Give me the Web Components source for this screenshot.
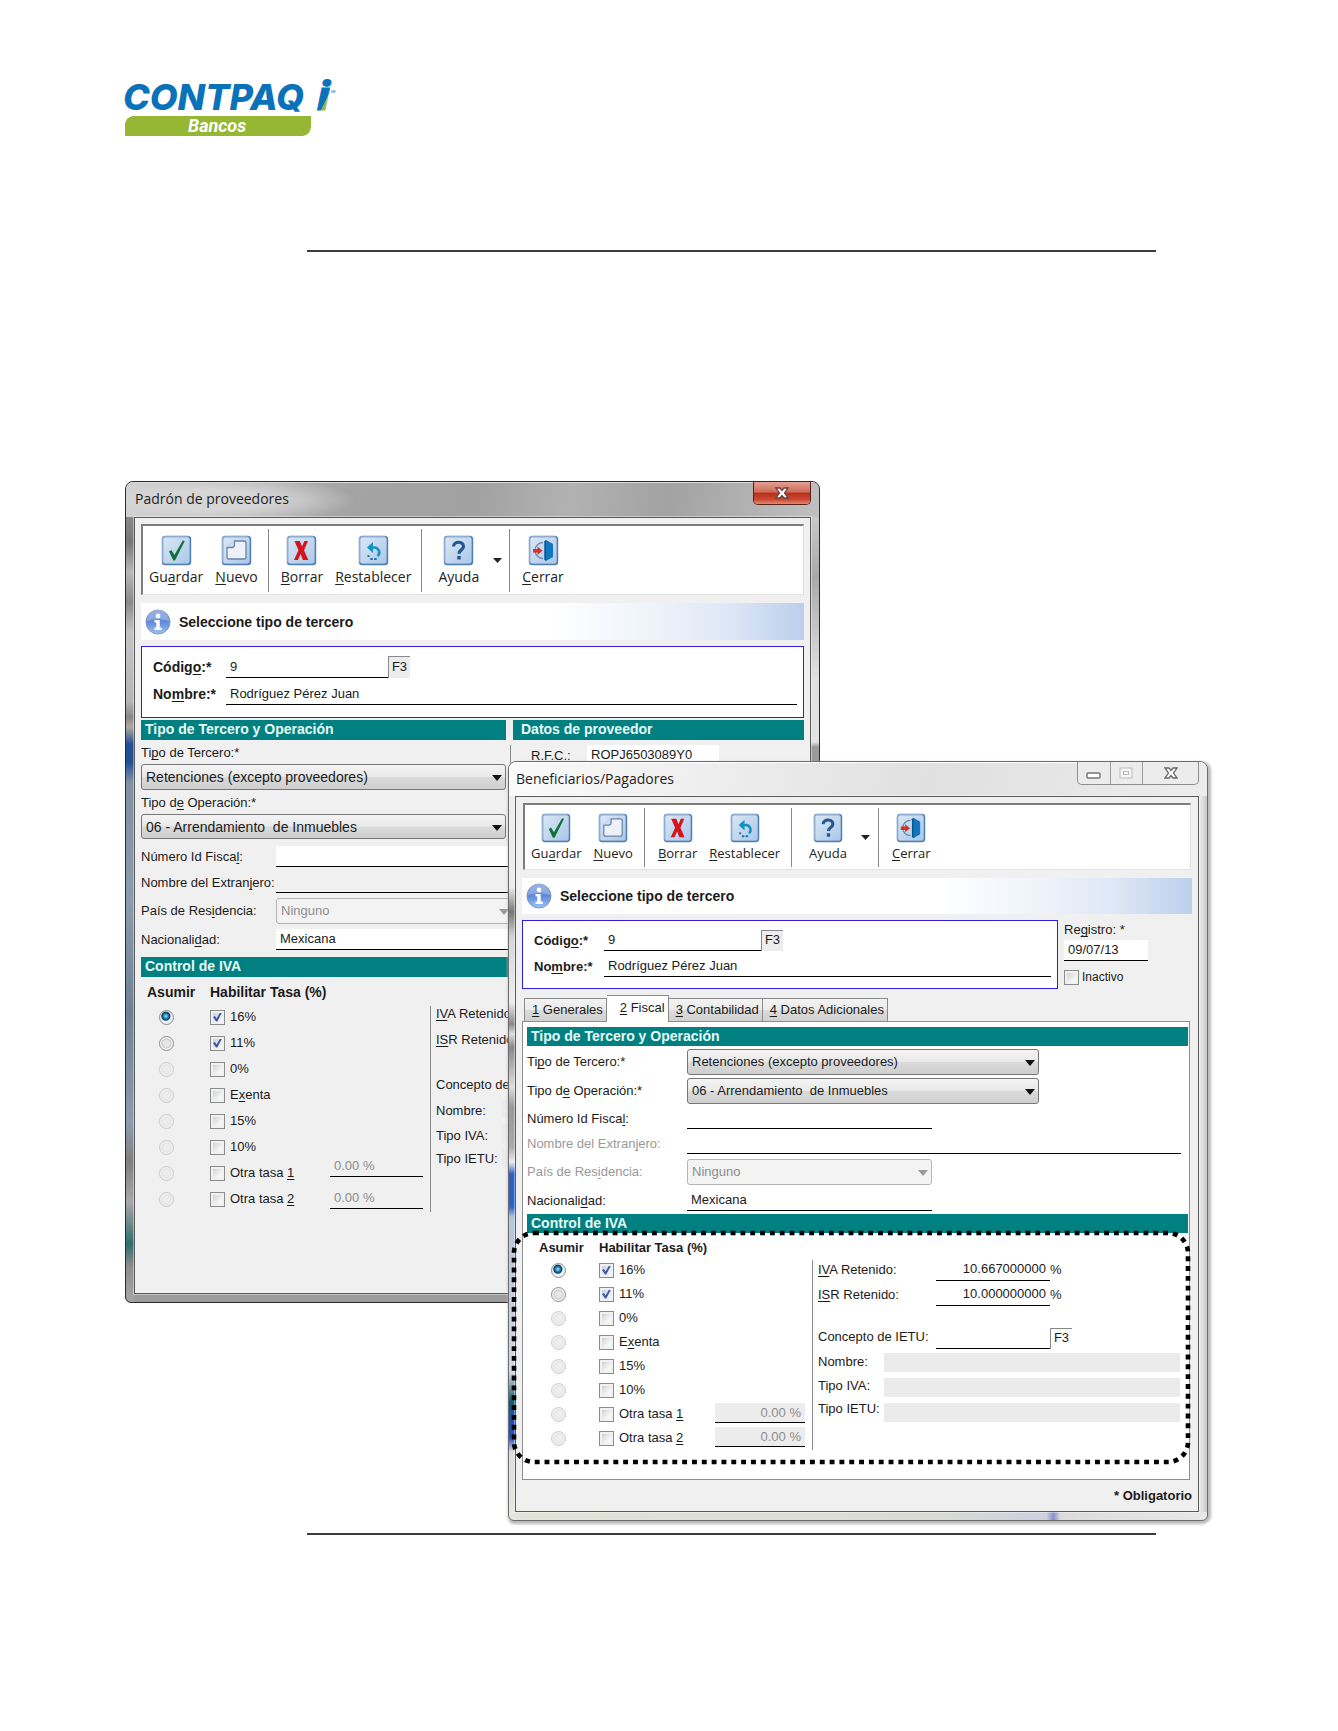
<!DOCTYPE html>
<html lang="es">
<head>
<meta charset="utf-8">
<title>CONTPAQi Bancos</title>
<style>
  body { margin: 0; background: #fff; color: #1b1b1b; font: 13px/16px "Liberation Sans", Arial, sans-serif; }
</style>
</head>
<body>
<manual-page></manual-page>

<script>
/* "Tipo de Te&rcero" -> the letter after & is the underlined access key */
const key = t => t.replace(/&(.)/g, '<u>$1</u>');
const plain = t => t.replace(/&/g, '');
const BASE = `
  *, *::before, *::after { box-sizing: border-box; }
  :host { display: block; box-sizing: border-box; }
  u { text-decoration: underline; text-underline-offset: 2px; text-decoration-skip-ink: none; }
  input, select, button { font: inherit; color: inherit; margin: 0; border-radius: 0; }
  input:focus { outline: none; }
  .line { display: block; width: 100%; min-width: 0; height: 21px; padding: 0 4px 1px; border: 0; border-bottom: 1px solid #000; background: #fff; }
  .line:disabled { color: #8d8d8d; }
`;
class Base extends HTMLElement {
  connectedCallback() {
    if (this.shadowRoot) return;
    this.attachShadow({ mode: 'open' }).innerHTML = `<style>${BASE}${this.css()}</style>${this.html()}`;
  }
  css() { return ''; }
  html() { return ''; }
  a(n, d = '') { return this.getAttribute(n) ?? d; }
}

customElements.define('brand-logo', class extends Base {
  css() { return `svg { display: block; width: 212px; height: 58px; overflow: visible; }`; }
  html() { return `
    <svg viewBox="0 0 212 58" role="img" aria-label="CONTPAQ i Bancos">
      <defs><linearGradient id="g" x1="0" y1="0" x2="0.55" y2="1">
        <stop offset="0.72" stop-color="#0a72b9"/><stop offset="0.74" stop-color="#95b935"/></linearGradient></defs>
      <text x="-2" y="31" font-size="36" fill="#0a72b9" font-family="Inter, sans-serif" font-weight="800" font-style="italic">CONTPAQ</text>
      <text x="192" y="31" font-size="39" fill="url(#g)" stroke="url(#g)" stroke-width="1" font-family="Open Sans, sans-serif" font-weight="800" font-style="italic">i</text>
      <text x="206" y="14" font-size="3" fill="#0a72b9" font-family="Roboto, sans-serif">MR</text>
      <path d="M8 37H186V48Q185 56 178 57H0V45Q1 38 8 37Z" fill="#95b733"/>
      <text x="63" y="53" font-size="18" font-weight="700" font-style="italic" fill="#fff" font-family="Roboto, sans-serif">Bancos</text>
    </svg>`; }
});

customElements.define('tool-icon', class extends Base {
  css() { return `:host { width: var(--icon, 31px); height: var(--icon, 31px); } svg { display: block; width: 100%; height: 100%; }`; }
  html() {
    const art = {
      save: `<path d="M8 16.500l2.400-1.600 3 5L21.800 5.500l2 .4L14 25.500h-1.700z" fill="#12703a"/>`,
      new: `<path d="M13.500 6H23a2 2 0 0 1 2 2v14a2 2 0 0 1-2 2H8a2 2 0 0 1-2-2v-9.500h5a2.500 2.500 0 0 0 2.500-2.500z" fill="#eef2f8" stroke="#6a83a8" stroke-width="1.300"/><path d="M6.500 11.500L12.500 6" fill="none" stroke="#c3d1e6" stroke-width="1"/>`,
      delete: `<path d="M8.500 6h5.300l2.200 5.500L18.400 6H22l-4 9.300 4.300 9.700h-5.400l-2.300-6-2.700 6H8l4.500-9.800z" fill="#d5151b"/>`,
      reset: `<path d="M10.500 12.500h6a5 5 0 0 1 3.200 8.600" fill="none" stroke="#1494c0" stroke-width="2.600"/><path d="M15 7v11l-6-5.500z" fill="#1494c0"/><g fill="#236fae"><rect x="9.500" y="20" width="2" height="2"/><rect x="12.300" y="23" width="2.500" height="2"/><rect x="16.200" y="23" width="2.500" height="2"/></g>`,
      help: `<path d="M10.500 11.500c.4-6 10.500-5.400 10 .2-.3 3.300-4.500 3.200-4.500 7" fill="none" stroke="#23588f" stroke-width="3.200"/><rect x="14.300" y="21" width="3.400" height="3.500" fill="#23588f"/>`,
      close: `<path d="M15 7.500a7.500 7.500 0 0 0 0 16" fill="none" stroke="#6d86ab" stroke-width="1.300"/><path d="M16.500 6.500L18 5l7 4v13l-7 4-1.500-1.500z" fill="#1176bd"/><path d="M16.500 6.500l1.500-1.500v21l-1.500-1.500z" fill="#0a5595"/><path d="M5 14h4.500v-2.500l5 4.200-5 4.200V17.500H5z" fill="#d63324"/>`
    }[this.a('name')];
    return `<svg viewBox="0 0 31 31" aria-hidden="true"><defs><linearGradient id="b" x1="0" y1="0" x2="1" y2="1"><stop offset="0" stop-color="#d9e7f7"/><stop offset=".5" stop-color="#c3d7ee"/><stop offset="1" stop-color="#aac8ea"/></linearGradient></defs>
      <rect x=".8" y=".8" width="29.400" height="29.400" rx="3.500" fill="#4f7db4"/><rect x="1" y="1" width="27.500" height="27.500" rx="3" fill="#8fadd2"/><rect x="2.500" y="2.500" width="26" height="26" rx="2" fill="url(#b)"/>${art}</svg>`;
  }
});

customElements.define('tool-button', class extends Base {
  css() { return `
    button { display: flex; flex-direction: column; align-items: center; gap: 1px; padding: 0 6px; border: 0; background: none; color: #222;
      font: var(--tool-font, 14px)/19px "Open Sans", sans-serif; white-space: nowrap; }`; }
  html() { return `<button type="button"><tool-icon name="${this.a('icon')}"></tool-icon><span>${key(this.a('label'))}</span></button>`; }
});

customElements.define('tool-bar', class extends Base {
  css() { return `
    :host { display: flex; height: var(--bar, 71px); border: 2px solid #7d7d7d; border-right: 1px solid #dedede; border-bottom: 1px solid #e2e2e2; background: #fff; }
    tool-button { padding-top: var(--bar-pad, 9px); }
    i { flex: none; width: 1px; margin: 3px var(--sep-r, 6px) 2px var(--sep-l, 4px); background: #8a8a8a; }
    button { align-self: stretch; padding: 0 2px 0 7px; border: 0; background: none; display: flex; align-items: center; }
    .ay { margin-left: var(--help-gap, 4px); }
    svg { display: block; }`; }
  html() { return `
    <tool-button icon="save" label="Gu&ardar"></tool-button><tool-button icon="new" label="&Nuevo"></tool-button><i></i>
    <tool-button icon="delete" label="&Borrar"></tool-button><tool-button icon="reset" label="&Restablecer"></tool-button><i></i>
    <tool-button class="ay" icon="help" label="Ayuda"></tool-button>
    <button type="button" aria-label="Más ayuda"><svg width="11" height="5"><path d="M1 0h9L5.500 5z" fill="#222"/></svg></button><i></i>
    <tool-button icon="close" label="&Cerrar"></tool-button>`; }
});

customElements.define('info-banner', class extends Base {
  css() { return `
    :host { display: flex; align-items: center; gap: 8px; height: var(--banner, 37px); padding-left: 4px; font: bold 14px/18px "Liberation Sans", Arial, sans-serif;
      background: linear-gradient(90deg, #fff 62%, #edf2fb 78%, #dfe8f7 88%, #bccfed); }
    svg { width: 26px; height: 26px; }`; }
  html() { return `<svg viewBox="0 0 26 26" aria-hidden="true"><defs><linearGradient id="c" x1="0" y1="0" x2="0" y2="1"><stop offset="0" stop-color="#6f97da"/><stop offset=".5" stop-color="#6089d8"/><stop offset="1" stop-color="#9cc4fa"/></linearGradient></defs>
    <circle cx="13" cy="13" r="12" fill="url(#c)" stroke="#8096be"/><path d="M2 12a11 11 0 0 1 22 0q-11-4-22 0z" fill="#fff" opacity=".25"/>
    <circle cx="13" cy="7" r="2.400" fill="#fff"/><path d="M9.500 11h5.200v7.500h2v2.500H9.500v-2.500h1.800v-5H9.500z" fill="#fff"/></svg><span><slot></slot></span>`; }
});

customElements.define('section-title', class extends Base {
  css() { return `:host { height: var(--sec, 20px); padding-left: 4px; background: #008080; color: #e8fbf8; font: bold 14px/18px "Liberation Sans", Arial, sans-serif; white-space: nowrap; overflow: hidden; }`; }
  html() { return `<slot></slot>`; }
});

customElements.define('code-box', class extends Base {
  css() { return `
    :host { display: flex; flex-direction: column; gap: 5px; border: 1px solid #2a1fe0; background: #fff; padding: 9px 6px var(--box-end, 12px) 11px; }
    div { display: flex; align-items: center; }
    label { flex: none; width: var(--box-label, 73px); font-weight: bold; font-size: var(--bold, 14px); white-space: nowrap; }
    .line { height: var(--field, 22px); }
    .code { width: var(--code, 162px); }
    button { align-self: stretch; width: 22px; padding: 0 0 2px; border: 0; border-top: 1px solid #888; border-left: 1px solid #888; background: #ededed; }`; }
  html() { return `
    <div><label for="c">Códig<u>o</u>:*</label><input id="c" class="line code" value="9"><button type="button">F3</button></div>
    <div><label for="n">No<u>m</u>bre:*</label><input id="n" class="line" value="Rodríguez Pérez Juan"></div>`; }
});

/* Label with a drop-down or an underlined text box */
customElements.define('form-field', class extends Base {
  css() { return `
    :host { display: flex; align-items: center; }
    :host([stacked]) { display: block; }
    label { flex: none; width: var(--label, 135px); white-space: nowrap; }
    :host([dim]) label { color: #999; }
    :host([stacked]) label { display: block; height: 24px; line-height: 26px; }
    .pick { position: relative; flex: 1; min-width: 0; }
    select { appearance: none; display: block; width: 100%; height: var(--pick, 26px); padding: 0 22px 0 4px; border: 1px solid #777; border-radius: 3px;
      background: linear-gradient(#f4f4f4, #e9e9e9 48%, #dadada 52%, #cfcfcf); font-size: var(--pick-font, 13px); }
    select:disabled { color: #8d8d8d; opacity: 1; border-color: #b5b5b5; background: #f3f3f3; }
    svg { position: absolute; right: 4px; top: 11px; pointer-events: none; }
    :host([fill="none"]) .line { background: transparent; }`; }
  html() {
    const off = this.hasAttribute('off') ? 'disabled' : '', v = this.a('value');
    const control = this.hasAttribute('pick')
      ? `<div class="pick"><select id="f" ${off}><option>${v}</option></select><svg width="10" height="6"><path d="M0 0h10L5 6z" fill="${off ? '#999' : '#111'}"/></svg></div>`
      : `<input id="f" class="line" value="${v}" ${off}>`;
    return `<label for="f">${key(this.a('label'))}</label>${control}`;
  }
});

const CHECKS = `
  input[type=checkbox] { appearance: none; flex: none; width: 15px; height: 15px; border: 1px solid #8b8d8d; background: linear-gradient(135deg, #cfd2d6, #f7f7f7 75%) content-box, #f1f1f1; padding: 2px; position: relative; }
  input[type=checkbox]:checked { background: linear-gradient(135deg, #c4cfe6, #eef2fa 75%) content-box, #f1f1f1; }
  input[type=checkbox]:checked::after { content: ""; display: block; width: 9px; height: 9px; background: #44569a; clip-path: polygon(0 50%, 22% 40%, 40% 66%, 78% 0, 100% 0, 48% 100%, 34% 100%); }
  input[type=radio] { appearance: none; flex: none; width: 15px; height: 15px; border: 1px solid #8a8c8e; border-radius: 50%; background: radial-gradient(circle, #e6e6e6 35%, #c9c9c9 48%, #f6f6f6 60%); }
  input[type=radio]:disabled { border-color: #cacaca; background: radial-gradient(circle, #ededed 35%, #e4e4e4 48%, #f0f0f0 60%); }
  input[type=radio]:checked { background: radial-gradient(circle at 45% 40%, #7fd0f2 6%, #1c6f9e 26%, #123a5c 38%, #e8f2f8 48%); }`;

customElements.define('date-panel', class extends Base {
  css() { return CHECKS + `
    :host { flex: none; width: 128px; }
    label { display: flex; align-items: center; gap: 3px; font-size: 12px; }
    label.top { font-size: 13px; gap: 0; height: 20px; white-space: pre; }
    .line { width: 84px; margin-bottom: 8px; }`; }
  html() { return `<label class="top" for="r">Re<u>g</u>istro: *</label><input id="r" class="line" value="09/07/13"><label><input type="checkbox">Inactivo</label>`; }
});

customElements.define('tab-strip', class extends Base {
  css() { return `
    :host { display: flex; align-items: flex-end; padding-left: 2px; height: 26px; }
    button { height: 23px; padding: 0 3px 0 7px; border: 1px solid #8a8a8a; border-bottom: 0; white-space: nowrap; background: linear-gradient(#f3f3f3, #ebebeb 48%, #dcdcdc 52%, #d0d0d0); }
    button + button { border-left-width: 0; }
    button:first-child { padding-left: 10px; }
    .on { height: 27px; margin-bottom: -1px; padding: 0 3px 3px 13px; background: #fff; }`; }
  html() { return this.a('tabs').split('|').map((t, i) => `<button type="button" role="tab" ${i == 1 ? 'class="on" aria-selected="true"' : ''}>${key(t)}</button>`).join(''); }
});

customElements.define('tax-control', class extends Base {
  css() { return CHECKS + `
    :host { position: relative; }
    .head { display: flex; height: var(--head, 27px); padding-top: var(--head-pad, 3px); padding-left: var(--head-in, 6px); font: bold var(--bold, 14px)/24px "Liberation Sans", Arial, sans-serif; white-space: nowrap; }
    .head span:first-child { width: var(--head-col, 63px); }
    .body { display: flex; }
    .rates { flex: none; width: var(--rates, 189px); padding-left: var(--radio-in, 18px); }
    .rates div { display: flex; align-items: center; height: var(--row, 26px); }
    .rates input[type=radio] { margin-right: var(--radio-gap, 36px); }
    .rates label { display: flex; align-items: center; gap: 5px; white-space: pre; }
    .other { flex: none; width: var(--other, 93px); display: flex; flex-direction: column; justify-content: flex-end; gap: var(--other-gap, 11px); padding-bottom: 3px; }
    .other .line { height: var(--other-h, 21px); text-align: var(--other-align, left); background: var(--other-bg, transparent); }
    .rule { flex: none; width: 1px; margin: 2px 5px 0 7px; background: #8c8c8c; }
    .names { flex: none; width: 66px; margin-top: var(--names-up, -1px); white-space: nowrap; }
    .names label { display: flex; align-items: center; height: var(--name-row, 25px); }
    .names label:nth-child(3) { margin-top: var(--name-gap, 17px); }
    .names label:nth-child(n+5) { height: 23px; }
    .vals { flex: 1; min-width: 0; padding: 2px 8px 0 0; }
    .vals div { display: flex; height: 21px; margin: 0 0 4px 52px; align-items: center; }
    .vals div .line { width: 114px; height: 21px; padding-bottom: 3px; text-align: right; background: transparent; }
    .vals div span { padding-bottom: 2px; }
    .vals div:nth-child(2) { margin-bottom: 22px; }
    .vals button { align-self: stretch; width: 22px; padding: 0 0 2px; border: 0; border-top: 1px solid #888; border-left: 1px solid #888; background: none; }
    .vals > input { display: block; width: 100%; height: 19px; margin-bottom: 6px; border: 0; background: #ebebeb; }
    .mark { display: none; position: absolute; pointer-events: none; left: -15px; right: -2px; top: -2px; bottom: -14px; }
    :host([marked]) .mark { display: block; }
    .mark svg { display: block; width: 100%; height: 100%; overflow: visible; }
    .mark rect { x: 2px; y: 2px; width: calc(100% - 4px); height: calc(100% - 4px); }`; }
  html() {
    const rates = ['16%', '11%', '0%', 'E&xenta', '15%', '10%', 'Otra tasa &1', 'Otra tasa &2'];
    const row = (id, unit) => `<div><input id="${id}" class="line" value="${this.a(id)}">${unit}</div>`;
    const unit = this.hasAttribute('v') ? '<span>%</span>' : '';
    const f3 = this.hasAttribute('v') ? '<button type="button">F3</button>' : '';
    return `
    <div class="head"><span>Asumir</span><span>Habilitar Tasa (%)</span></div>
    <div class="body">
      <div class="rates">${rates.map((r, i) => `<div><input type="radio" name="assume" aria-label="Asumir ${plain(r)}" ${i == 0 ? 'checked' : ''} ${i > 1 ? 'disabled' : ''}><label><input type="checkbox" ${i < 2 ? 'checked' : ''}><span>${key(r)}</span></label></div>`).join('')}</div>
      <div class="other"><input class="line" aria-label="Otra tasa 1" value="0.00 %" disabled><input class="line" aria-label="Otra tasa 2" value="0.00 %" disabled></div>
      <div class="rule"></div>
      <div class="names"><label for="v"><span><u>IV</u>A Retenido:</span></label><label for="s"><span><u>IS</u>R Retenido:</span></label><label for="c">Concepto de IETU:</label><label for="n">Nombre:</label><label for="ti">Tipo IVA:</label><label for="te">Tipo IETU:</label></div>
      <div class="vals">${row('v', unit)}${row('s', unit)}${row('c', f3)}
        <input id="n" readonly><input id="ti" readonly><input id="te" readonly></div>
    </div>
    <div class="mark"><svg aria-hidden="true"><rect rx="20" fill="none" stroke="#000" stroke-width="4.600" stroke-dasharray="4.900 4.930"/></svg></div>`;
  }
});

customElements.define('app-window', class extends Base {
  css() { return `
    :host { border: 1px solid #2b2b2b; border-radius: 8px 8px 6px 6px; padding: 0 8px 8px; overflow: hidden;
      background:
        linear-gradient(#a0a0a0, #777 60px, #b8b8b8 90px, #8a8a8a 120px, #c4c4c4 150px, #b5b5b5 220px, #888 235px, #b0a9a0 245px, #234f94 262px, #234f94 280px, #8091a5 300px, #8c9caf 420px, #6e8196 530px, #8c9caf 640px, #808080 680px, #a8a8a8 720px, #2f6f6c 762px, #8f8f8f 785px, #a6a6a6) 0 0 / 8px 100% no-repeat,
        linear-gradient(#c9c9c9, #aaa 60px, #e0e0e0 160px, #e3e3e3 225px, #9a9a9a 230px, #aaa) 100% 35px / 8px 100% no-repeat,
        #9c9c9c; }
    header { display: flex; align-items: flex-start; justify-content: space-between; height: 35px; margin: 0 -8px; padding: 0 8px 0 9px; border-top: 1px solid #dcdcdc;
      background: radial-gradient(ellipse 150px 24px at 80px 50%, #d6d6d6 40%, #d6d6d600), linear-gradient(100deg, #cfcfcf, #a4a4a4 32%, #a1a1a1 50%, #b2b2b2 64%, #a2a2a2 78%, #c0c0c0); }
    h2 { margin: 0; font: 14px/32px "Open Sans", sans-serif; color: #1e1e1e; }
    .ctl { display: flex; height: 23px; margin-top: -1px; border: 1px solid #5b2018; border-top: 0; border-radius: 0 0 5px 5px; overflow: hidden; }
    .ctl button { display: flex; align-items: center; justify-content: center; padding: 0; border: 0; }
    .red { width: 56px; background: linear-gradient(#e3a192, #cf6b58 45%, #b92f1a 52%, #cb4a34 80%, #e58a70); }
    .client { padding: 6px; border: 1px solid #5a5a5a; background: #f0f0f0; box-shadow: 0 0 0 1px #ffffff66; }
    :host([pale]) { border-color: #6c6c6c; padding-left: 6px; box-shadow: 3px 1px 3px #bbb, 0 3px 3px #bbb;
      background:
        linear-gradient(#eee, #ececec 125px, #777 150px, #d5d5d5 175px, #eee 240px, #888 262px, #ddd 272px, #888 285px, #ddd 325px, #999 345px, #aaa 385px, #eee 400px, #2b62c8 412px, #2b62c8 445px, #b4c4dd 455px, #d5dae4 610px, #0c5f73 640px, #2550b8 660px, #2550b8 675px, #ddd 690px, #e8e8e0) 0 0 / 7px 100% no-repeat,
        linear-gradient(90deg, #e2e4da, #dadcd4 60%, #cdd0e0 77%, #8a8fd0 78%, #dcdcdc 79%, #e8e8e8) 0 100% / 100% 8px no-repeat,
        linear-gradient(90deg, #efefef, #c9c9c9) 100% 0 / 8px 100% no-repeat, #eee; }
    :host([pale]) header { height: 34px; margin-left: -6px; padding-left: 7px; border-top-color: #fff; background: linear-gradient(100deg, #fafafa, #e9e9e9 40%, #e0e0e0 60%, #ececec); }
    :host([pale]) .client { padding-bottom: 0; }
    :host([pale]) .ctl { border-color: #8e8e8e; background: #ececec; }
    :host([pale]) .ctl button { background: none; border-right: 1px solid #9d9d9d; }
    :host([pale]) .ctl button:last-child { border: 0; }`; }
  html() {
    const x = (f, s) => `<svg width="14" height="12" viewBox="0 0 14 12"><path d="M1 1h4l2 2.500L9 1h4L9.500 6l3.500 5H9L7 8.500 5 11H1l3.500-5z" fill="${f}" stroke="${s}" stroke-width="1.300"/></svg>`;
    const ctl = this.hasAttribute('pale')
      ? `<button type="button" style="width:33px" aria-label="Minimizar"><svg width="16" height="14"><rect x="1" y="7" width="13" height="5" rx="1" fill="#fff" stroke="#777" stroke-width="1.500"/></svg></button>
         <button type="button" style="width:32px" aria-label="Maximizar"><svg width="15" height="12"><rect x="1" y="1" width="12" height="10" fill="#f6f6f6" stroke="#bbb"/><rect x="4.500" y="4.500" width="5" height="3" fill="#fff" stroke="#bbb"/></svg></button>
         <button type="button" style="width:55px" aria-label="Cerrar ventana">${x('#fff', '#666')}</button>`
      : `<button class="red" type="button" aria-label="Cerrar ventana">${x('#fff', '#6b4040')}</button>`;
    return `<header><h2>${this.a('heading')}</h2><div class="ctl">${ctl}</div></header><div class="client"><slot></slot></div>`;
  }
});

customElements.define('supplier-form', class extends Base {
  css() { return `
    info-banner { margin: 8px 0 6px; }
    code-box { margin-bottom: 2px; }
    .cols { display: flex; }
    .left { flex: none; width: 372px; }
    .left section-title, form-field[stacked] { margin-right: 7px; }
    .rows { display: flex; flex-direction: column; gap: 5px; margin: 7px 0; }
    .right { flex: 1; min-width: 0; }
    .right section-title { padding-left: 8px; }
    .rfc { width: 188px; --label: 56px; margin: 5px 0 0; }
    .rfcrow { display: flex; margin-left: -3px; }
    .rfcrow i { width: 1px; margin: 5px 20px 0 0; background: #8c8c8c; }
    tax-control { padding-bottom: 75px; --names-up: -3px; --name-row: 26px; --name-gap: 19px; }
    form-field[stacked] { --pick: 26px; --pick-font: 14px; }
    form-field[stacked] + form-field[stacked] { --pick: 25px; }`; }
  html() { return `
    <tool-bar></tool-bar><info-banner>Seleccione tipo de tercero</info-banner><code-box></code-box>
    <div class="cols"><div class="left">
      <section-title>Tipo de Tercero y Operación</section-title>
      <form-field stacked pick label="Ti&po de Tercero:*" value="Retenciones (excepto proveedores)"></form-field>
      <form-field stacked pick label="Tipo d&e Operación:*" value="06 - Arrendamiento&nbsp; de Inmuebles"></form-field>
      <div class="rows">
        <form-field label="Número Id Fisca&l:"></form-field>
        <form-field fill="none" label="Nombre del Extran&jero:" off></form-field>
        <form-field pick off label="País de Res&idencia:" value="Ninguno"></form-field>
        <form-field label="Nacionali&dad:" value="Mexicana"></form-field>
      </div></div>
      <div class="right"><section-title>Datos de proveedor</section-title>
        <div class="rfcrow"><i></i><form-field class="rfc" label="R.F.C.:" value="ROPJ6503089Y0"></form-field></div></div>
    </div>
    <section-title>Control de IVA</section-title><tax-control></tax-control>`; }
});

customElements.define('payee-form', class extends Base {
  css() { return `
    :host { --icon: 30px; --bar: 67px; --bar-pad: 8px; --tool-font: 13px; --sep-l: 5px; --sep-r: 7px; --banner: 36px; --sec: 19px; --bold: 13px; --box-label: 70px; --box-end: 11px; --field: 21px; --code: 157px; --label: 160px;
      --head: 25px; --head-pad: 3px; --head-in: 12px; --head-col: 60px; --row: 24px; --rates: 188px; --radio-in: 24px; --radio-gap: 33px; --other: 90px; --other-gap: 4px; --other-h: 20px; --other-align: right; --other-bg: #ececec; }
    tool-bar { margin: 0 1px; }
    info-banner { margin: 8px 0 6px; }
    .top { display: flex; gap: 6px; margin-bottom: 6px; }
    code-box { flex: 1; min-width: 0; }
    .panel { margin-right: 2px; padding: 5px 1px 29px 4px; border: 1px solid #8e8e8e; background: #fff; }
    .rows { display: flex; flex-direction: column; gap: 4px; margin: 3px 7px 3px 0; }
    .w1 { width: 512px; } .w2 { width: 405px; }
    .rows > :first-child { margin-bottom: -1px; }
    .rows > :nth-child(5) { margin: 1px 0; }
    footer { height: 31px; font: bold 13px/31px "Liberation Sans", Arial, sans-serif; text-align: right; }`; }
  html() { return `
    <tool-bar></tool-bar><info-banner>Seleccione tipo de tercero</info-banner>
    <div class="top"><code-box></code-box><date-panel></date-panel></div>
    <tab-strip tabs="&1 Generales|&2 Fiscal|&3 Contabilidad|&4 Datos Adicionales"></tab-strip>
    <div class="panel">
      <section-title>Tipo de Tercero y Operación</section-title>
      <div class="rows">
        <form-field class="w1" pick label="Ti&po de Tercero:*" value="Retenciones (excepto proveedores)"></form-field>
        <form-field class="w1" pick label="Tipo d&e Operación:*" value="06 - Arrendamiento&nbsp; de Inmuebles"></form-field>
        <form-field class="w2" label="Número Id Fisca&l:"></form-field>
        <form-field dim off label="Nombre del Extran&jero:"></form-field>
        <form-field class="w2" dim off pick label="País de Res&idencia:" value="Ninguno"></form-field>
        <form-field class="w2" label="Nacionali&dad:" value="Mexicana"></form-field>
      </div>
      <section-title>Control de IVA</section-title><tax-control marked v="10.667000000" s="10.000000000"></tax-control>
    </div>
    <footer>* Obligatorio</footer>`; }
});

customElements.define('manual-page', class extends Base {
  css() { return `
    :host { padding: 79px 130px 195px 125px; }
    hr { height: 2px; margin: 0 52px 0 182px; border: 0; background: #3c3c3c; }
    brand-logo { margin-bottom: 113px; }
    /* the two windows overlap freely, as on a desktop */
    .desk { position: relative; padding: 280px 0 0 383px; margin: 229px 0 12px; }
    .back { position: absolute; left: 0; right: 388px; top: 0; }
    .front { position: relative; }`; }
  html() { return `
    <brand-logo></brand-logo><hr>
    <div class="desk">
      <app-window class="back" heading="Padrón de proveedores"><supplier-form></supplier-form></app-window>
      <app-window class="front" pale heading="Beneficiarios/Pagadores"><payee-form></payee-form></app-window>
    </div><hr>`; }
});
</script>
</body>
</html>
